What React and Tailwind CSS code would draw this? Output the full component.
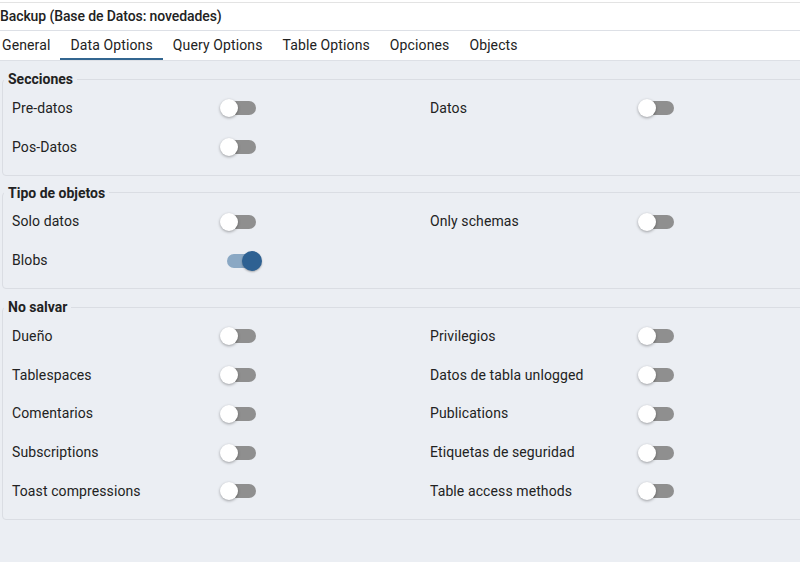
import React from 'react';

const font = { fontFamily: 'Roboto, "Noto Sans", sans-serif' };

function Switch({ on = false }) {
  if (on) {
    return (
      <div className="relative w-[42px] h-[20px] shrink-0">
        <div className="absolute left-[7px] top-[3px] w-[34px] h-[14px] rounded-full bg-[#8aa8c4]" />
        <div className="absolute left-[22px] top-0 w-[20px] h-[20px] rounded-full bg-[#2e6192] shadow-[0_1px_2px_rgba(0,0,0,0.3)]" />
      </div>
    );
  }
  return (
    <div className="relative w-[36px] h-[18px] shrink-0">
      <div className="absolute left-[2px] top-[2px] w-[34px] h-[14px] rounded-full bg-[#8f8f8f]" />
      <div className="absolute left-0 top-0 w-[18px] h-[18px] rounded-full bg-white shadow-[0_1px_3px_rgba(0,0,0,0.35)]" />
    </div>
  );
}

function Row({ label, on }) {
  return (
    <div className="flex items-center h-[38.75px]">
      <div className="w-[208px] shrink-0 text-[14px] tracking-[0.1px] text-[#222]">{label}</div>
      <Switch on={on} />
    </div>
  );
}

function Group({ title, rows, className = '' }) {
  return (
    <fieldset className={`ml-[2px] w-[860px] border border-[#dadde3] rounded-[4px] pb-[8px] ${className}`}>
      <legend className="ml-px px-1 text-[14px] leading-[20px] font-bold text-[#222]">{title}</legend>
      <div className="grid grid-cols-[418px_418px] pl-[9px]">
        {rows.map((r, i) => (
          <div key={i}>{r ? <Row label={r.label} on={r.on} /> : <div className="h-[38.75px]" />}</div>
        ))}
      </div>
    </fieldset>
  );
}

export default function App() {
  return (
    <div className="w-[800px] h-[562px] overflow-hidden bg-[#ebeef3]" style={font}>
      {/* cut-off strip from the window behind */}
      <div className="h-[3px] overflow-hidden bg-white border-b border-[#e3e3e3] relative">
        <div className="absolute left-[130px] top-[-12px] text-[12px] leading-[14px] whitespace-nowrap">
          <span className="text-[#444]">9</span>
          <span className="ml-[10px] text-[#b3279c]">CREATE DATABASE</span>
          <span className="ml-[30px] text-[#2f6cb5]">novedades</span>
        </div>
      </div>
      <div className="h-[28px] bg-white border-b border-[#dde0e6] pt-[3px] leading-[20px] text-[14px] tracking-[-0.1px] font-medium text-[#222]">
        Backup (Base de Datos: novedades)
      </div>
      <div className="flex bg-white border-b border-[#dde0e6] ml-[-8px]">
        {['General', 'Data Options', 'Query Options', 'Table Options', 'Opciones', 'Objects'].map((t) => (
          <div
            key={t}
            className={`h-[29px] px-[10px] pt-[4px] leading-[20px] text-[14px] tracking-[0.12px] text-[#222] border-b-2 ${
              t === 'Data Options' ? 'border-[#326690]' : 'border-transparent'
            }`}
          >
            {t}
          </div>
        ))}
      </div>

      <Group
        className="mt-[8px]"
        title="Secciones"
        rows={[{ label: 'Pre-datos' }, { label: 'Datos' }, { label: 'Pos-Datos' }, null]}
      />
      <Group
        className="mt-[7px]"
        title="Tipo de objetos"
        rows={[{ label: 'Solo datos' }, { label: 'Only schemas' }, { label: 'Blobs', on: true }, null]}
      />
      <Group
        className="mt-[8px]"
        title="No salvar"
        rows={[
          { label: 'Dueño' },
          { label: 'Privilegios' },
          { label: 'Tablespaces' },
          { label: 'Datos de tabla unlogged' },
          { label: 'Comentarios' },
          { label: 'Publications' },
          { label: 'Subscriptions' },
          { label: 'Etiquetas de seguridad' },
          { label: 'Toast compressions' },
          { label: 'Table access methods' },
        ]}
      />
    </div>
  );
}
